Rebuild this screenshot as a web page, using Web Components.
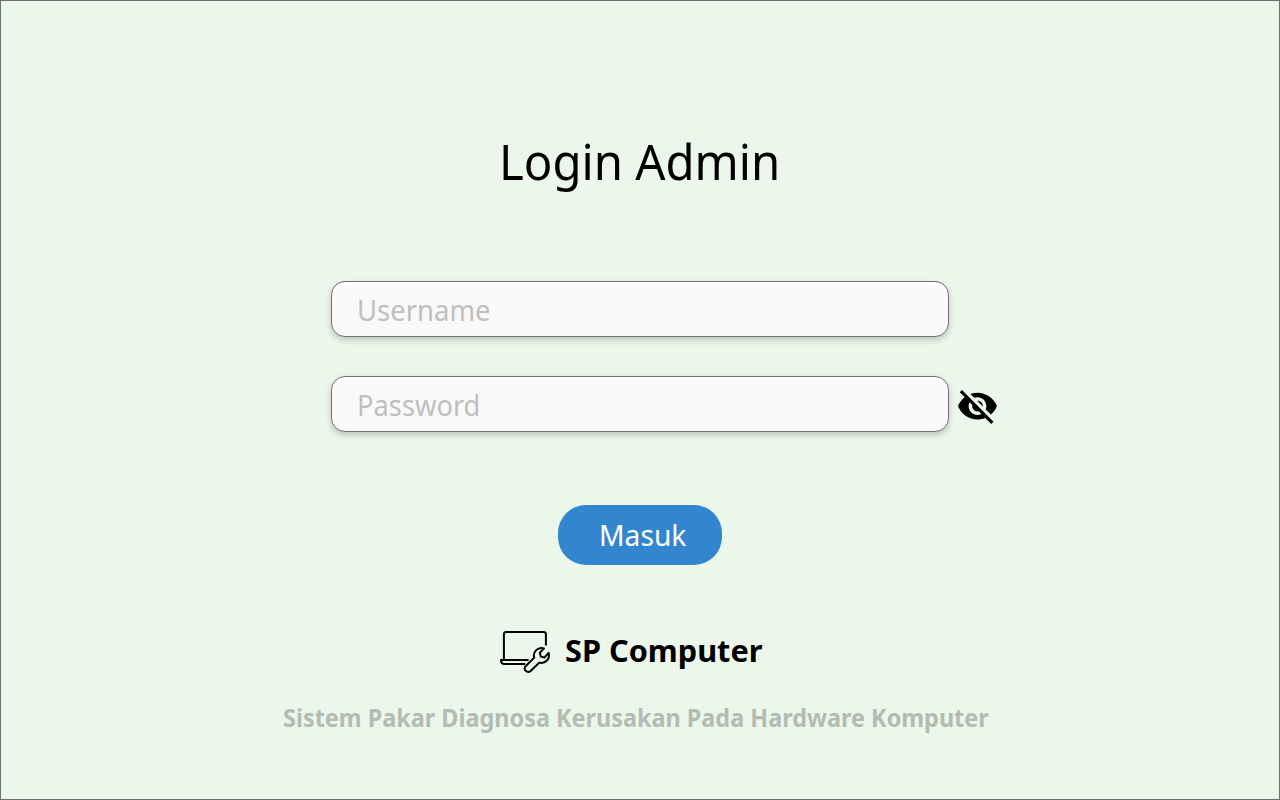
<!DOCTYPE html>
<html lang="id">
<head>
<meta charset="utf-8">
<title>Login Admin</title>
<style>
html,body{margin:0;height:100%;background:#ebf7ea}
body{font-family:"Noto Sans","Open Sans",sans-serif}
</style>
</head>
<body>
<login-page></login-page>
<script>
const define = (name, html, setup) => customElements.define(name, class extends HTMLElement {
  constructor() {
    super();
    this.attachShadow({mode: 'open'}).innerHTML = html;
  }
  connectedCallback() { if (setup) setup(this, this.shadowRoot); }
});

// A line of text condensed or expanded to a given advance width.
define('fit-text', `<style>
:host{display:block;white-space:nowrap}
span{display:inline-block;transform-origin:0 50%}
</style><span><slot></slot></span>`, (el, root) => {
  const span = root.querySelector('span');
  const width = Number(el.getAttribute('width'));
  el.style.width = width + 'px';
  span.style.transform = `scaleX(${width / span.offsetWidth})`;
});

define('text-field', `<style>
:host{display:flex;align-items:center;box-sizing:border-box;width:618px;height:56px;padding:2px 0 0 25px;
border:1px solid #707070;border-radius:14px;background:#f9f9f9;
box-shadow:0 3px 6px rgba(0,0,0,.2),inset 0 3px 6px #fff;color:#bfbfbf;font-size:29.5px;line-height:40px}
</style><slot></slot>`);

define('eye-off', `<style>:host{display:block;width:39px;height:34px}svg{display:block}</style>
<svg width="39" height="34" viewBox="1 3 22 19" preserveAspectRatio="none"><path d="M12 7c2.76 0 5 2.24 5 5 0 .65-.13 1.26-.36 1.83l2.92 2.92c1.51-1.26 2.7-2.89 3.43-4.75-1.73-4.39-6-7.5-11-7.5-1.4 0-2.74.25-3.98.7l2.16 2.16C10.74 7.13 11.35 7 12 7zM2 4.27l2.28 2.28.46.46C3.08 8.3 1.78 10.02 1 12c1.73 4.39 6 7.5 11 7.5 1.55 0 3.03-.3 4.38-.84l.42.42L19.73 22 21 20.73 3.27 3 2 4.27zM7.53 9.8l1.55 1.55c-.05.21-.08.43-.08.65 0 1.66 1.34 3 3 3 .22 0 .44-.03.65-.08l1.55 1.55c-.67.33-1.41.53-2.2.53-2.76 0-5-2.24-5-5 0-.79.2-1.53.53-2.2zm4.31-.78l3.15 3.15.02-.16c0-1.66-1.34-3-3-3l-.17.01z"/></svg>`);

define('pill-button', `<style>
:host{display:flex;align-items:center;box-sizing:border-box;width:164px;height:60px;padding-left:41px;border-radius:28px;
background:#3286cf;color:#fff;font-size:29.5px;line-height:40px}
</style><slot></slot>`);

define('laptop-wrench', `<style>:host{display:block;width:52px;height:44px}svg{display:block}</style>
<svg width="52" height="44" viewBox="0 0 52 44" fill="none" stroke="#000" stroke-width="2" stroke-linejoin="round">
<path d="M3.9 29.8V4.3Q3.9 1.9 6.3 1.9H43.5Q45.9 1.9 45.9 4.3V15.5"/>
<path d="M28.6 30H.9Q1 33.9 4.4 33.9H25.2"/>
<path d="M25.6 36.2L34.2 27.6C32.6 22.2 37.2 16.8 44 18.4L39.8 22.8L40.8 26.6L44.5 27.5L48.6 22.8C50.4 28.6 45.4 34.2 39.2 32.6L30.6 41C27.4 43.8 22.4 39.4 25.6 36.2Z"/>
</svg>`);

define('login-page', `<style>
:host{display:flex;flex-direction:column;align-items:center;box-sizing:border-box;width:1280px;height:800px;
padding-top:130px;border:1px solid #707070;background:#ebf7ea}
.title{font-size:50px;line-height:60px;margin-right:1px}
form{display:flex;flex-direction:column;align-items:center;margin:90px 0 0}
.password{display:grid;grid-template-columns:1fr 618px 1fr;align-items:center;margin:39px 0 73px}
.password text-field{grid-column:2}
eye-off{margin:5px 0 0 9px}
.brand{display:flex;align-items:center;gap:13px;margin:63px 19px 0 0;height:44px;font-size:31px;font-weight:700;line-height:44px;
text-shadow:2px 2px 3px rgba(255,255,255,.2)}
laptop-wrench{padding-top:3px}
.tagline{margin:30px 8px 0 0;font-size:25px;line-height:30px;font-weight:700;color:#b3bcb2}
</style>
<fit-text class="title" width="281">Login Admin</fit-text>
<form>
<text-field><fit-text width="134">Username</fit-text></text-field>
<div class="password"><text-field><fit-text width="123">Password</fit-text></text-field><eye-off></eye-off></div>
<pill-button><fit-text width="87">Masuk</fit-text></pill-button>
</form>
<div class="brand"><laptop-wrench></laptop-wrench><fit-text width="197">SP Computer</fit-text></div>
<fit-text class="tagline" width="706">Sistem Pakar Diagnosa Kerusakan Pada Hardware Komputer</fit-text>`);
</script>
</body>
</html>
